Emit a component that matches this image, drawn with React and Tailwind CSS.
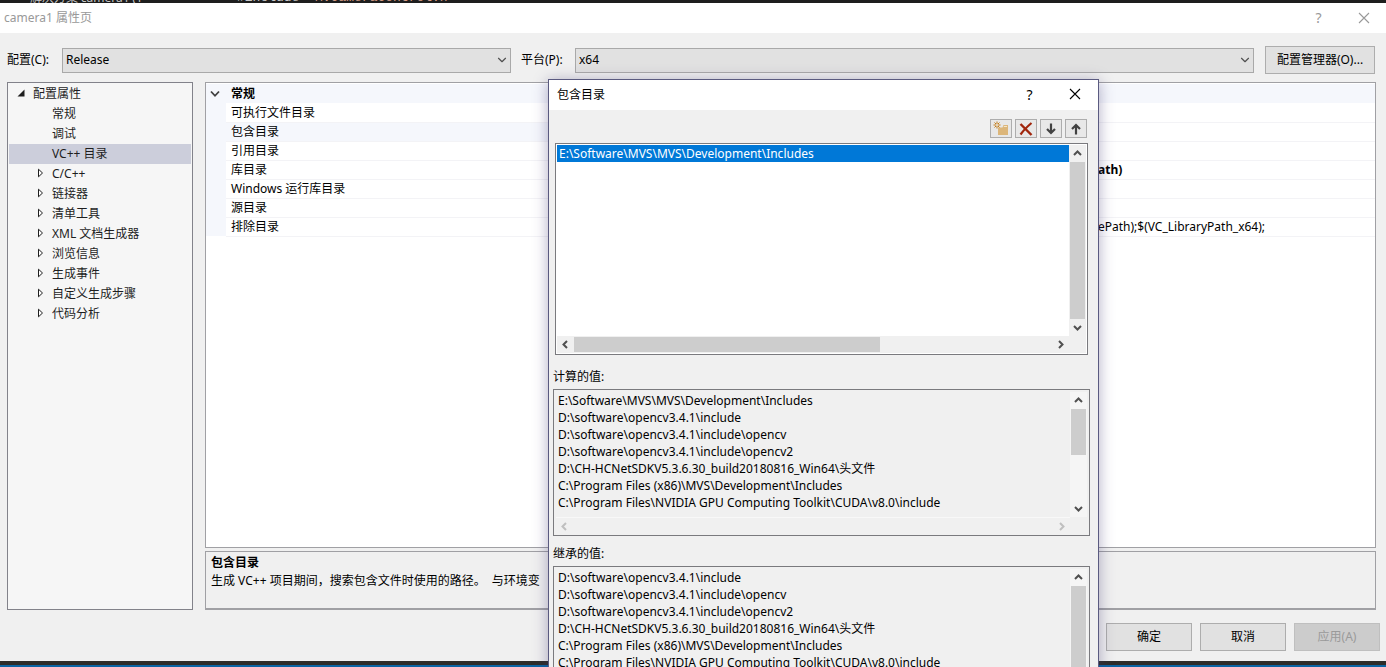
import React from 'react';
import { ChevronDown } from 'lucide-react';

const treeItems = [
    { label: '常规', leaf: true },
    { label: '调试', leaf: true },
    { label: 'VC++ 目录', leaf: true, selected: true },
    { label: 'C/C++' },
    { label: '链接器' },
    { label: '清单工具' },
    { label: 'XML 文档生成器' },
    { label: '浏览信息' },
    { label: '生成事件' },
    { label: '自定义生成步骤' },
    { label: '代码分析' },
];

const properties = [
    { name: '可执行文件目录' },
    { name: '包含目录', selected: true },
    { name: '引用目录' },
    { name: '库目录', value: 'ath)', bold: true },
    { name: 'Windows 运行库目录' },
    { name: '源目录' },
    { name: '排除目录', value: 'ePath);$(VC_LibraryPath_x64);' },
];

const inheritedPaths = [
    'D:\\software\\opencv3.4.1\\include',
    'D:\\software\\opencv3.4.1\\include\\opencv',
    'D:\\software\\opencv3.4.1\\include\\opencv2',
    'D:\\CH-HCNetSDKV5.3.6.30_build20180816_Win64\\头文件',
    'C:\\Program Files (x86)\\MVS\\Development\\Includes',
    'C:\\Program Files\\NVIDIA GPU Computing Toolkit\\CUDA\\v8.0\\include',
];

const includePath = 'E:\\Software\\MVS\\MVS\\Development\\Includes';

const arrowPaths = {
    up: 'M1 6 L4.5 2.5 L8 6',
    down: 'M1 3 L4.5 6.5 L8 3',
    left: 'M6 1 L2.5 4.5 L6 8',
    right: 'M3 1 L6.5 4.5 L3 8',
};

const ScrollArrow = ({ dir, label, disabled }) => (
    <button
        type="button"
        aria-label={label}
        disabled={disabled}
        className="flex h-[17px] w-[17px] shrink-0 items-center justify-center text-[#505050] disabled:text-[#bfbfbf]"
    >
        <svg width="9" height="9" viewBox="0 0 9 9" fill="none" stroke="currentColor" strokeWidth="2">
            <path d={arrowPaths[dir]} />
        </svg>
    </button>
);

const Select = ({ id, value }) => (
    <div className="relative w-full">
        <select
            id={id}
            defaultValue={value}
            className="block h-[25px] w-full appearance-none border border-[#a9a9a9] bg-[#e1e1e1] px-[3px] pb-[2px] text-[12px]"
        >
            <option>{value}</option>
        </select>
        <ChevronDown className="pointer-events-none absolute top-[5px] right-[2px] h-[14px] w-[14px] text-[#505050]" strokeWidth={2} />
    </div>
);

const PushButton = ({ children, disabled }) => (
    <button
        type="button"
        disabled={disabled}
        className="h-7 w-[86px] border border-[#adadad] bg-[#e1e1e1] pb-[2px] text-black disabled:border-[#bfbfbf] disabled:bg-[#cccccc] disabled:text-[#9a9a9a]"
    >
        {children}
    </button>
);

const ToolButton = ({ label, children }) => (
    <button
        type="button"
        aria-label={label}
        className="flex h-[19px] w-[22px] items-center justify-center border border-[#adadad] bg-[#e8e8e8]"
    >
        {children}
    </button>
);

const CloseIcon = () => (
    <svg width="12" height="12" viewBox="0 0 12 12" fill="none" stroke="currentColor" strokeWidth="1.1">
        <path d="M1 1 L11 11 M11 1 L1 11" />
    </svg>
);

const PropertyTree = () => (
    <nav className="w-[186px] shrink-0 border border-[#82828a] bg-[#f6f6f6] p-px">
        <div className="flex h-5 items-center pb-[2px] pl-2">
            <svg width="8" height="8" viewBox="0 0 8 8" className="mr-2 fill-[#1e1e1e]">
                <path d="M7.5 0.5 V7.5 H0.5 Z" />
            </svg>
            配置属性
        </div>
        <ul>
            {treeItems.map((item) => (
                <li
                    key={item.label}
                    className={`flex h-5 items-center pb-[2px] ${item.selected ? 'bg-[#cccedb]' : ''} ${item.leaf ? 'pl-[43px]' : 'pl-7'}`}
                >
                    {!item.leaf && (
                        <svg width="7" height="10" viewBox="0 0 7 10" className="mr-2 fill-white stroke-[#1e1e1e]">
                            <path d="M1.5 1.2 L5.5 5 L1.5 8.8 Z" />
                        </svg>
                    )}
                    {item.label}
                </li>
            ))}
        </ul>
    </nav>
);

const PropertyGrid = () => (
    <div className="min-h-0 flex-1 overflow-hidden border border-[#a0a0a4] bg-white pt-px">
        <table className="w-full table-fixed border-collapse text-left whitespace-nowrap text-black">
            <colgroup>
                <col className="w-5" />
                <col className="w-[322px]" />
                <col />
            </colgroup>
            <tbody>
                <tr className="h-[19px] bg-[#f5f7fc]">
                    <td className="p-0">
                        <svg width="10" height="8" viewBox="0 0 10 8" className="ml-1 fill-none stroke-[#404040]" strokeWidth="1.8">
                            <path d="M1 1.5 L5 5.8 L9 1.5" />
                        </svg>
                    </td>
                    <th colSpan={2} className="p-0 pl-[5px] font-bold">常规</th>
                </tr>
                {properties.map((prop) => (
                    <tr key={prop.name} className="h-[19px]">
                        <td className="bg-[#f5f7fc] p-0" />
                        <td className={`border-b border-[#f3f3f6] p-0 pl-[5px] ${prop.selected ? 'bg-[#f5f7fc]' : ''}`}>{prop.name}</td>
                        <td className={`border-b border-[#f3f3f6] p-0 pl-[550px] ${prop.bold ? 'font-bold' : ''}`}>{prop.value}</td>
                    </tr>
                ))}
            </tbody>
        </table>
    </div>
);

const PathBox = ({ id, label, paths, thumb }) => (
    <div className="mr-2 ml-1 flex flex-col">
        <label htmlFor={id} className="mb-[3px] leading-[18px]">{label}</label>
        <div className="flex h-[147px] flex-col border border-[#7a7a7e] bg-[#f0f0f0] px-[2px] pt-[2px]">
            <div className="flex min-h-0 flex-1">
                <textarea
                    id={id}
                    readOnly
                    value={paths.join('\n')}
                    className="block min-w-0 flex-1 resize-none overflow-hidden bg-[#f0f0f0] pl-[2px] leading-[17px] whitespace-pre outline-none"
                />
                <div className="flex w-[17px] flex-col bg-[#f5f5f5]">
                    <ScrollArrow dir="up" label="向上滚动" />
                    <div className="flex-1 pr-px pl-px">
                        <div className={`bg-[#cdcdcd] ${thumb}`} />
                    </div>
                    <ScrollArrow dir="down" label="向下滚动" />
                </div>
            </div>
            <div className="mr-[17px] flex justify-between border-t border-[#f8f8f8]">
                <ScrollArrow dir="left" label="向左滚动" disabled />
                <ScrollArrow dir="right" label="向右滚动" disabled />
            </div>
        </div>
    </div>
);

const IncludeDialog = () => (
    <section
        role="dialog"
        aria-label="包含目录"
        className="absolute top-[79px] left-[548px] flex w-[551px] flex-col border border-[#5a5a80] bg-[#f0f0f0] text-black shadow-[0_2px_14px_rgba(60,50,110,0.4)]"
    >
        <header className="flex h-[30px] items-center bg-white pr-px pb-[2px] pl-2">
            <h2 className="flex-1">包含目录</h2>
            <button type="button" aria-label="帮助" className="w-[45px] text-[14px]">?</button>
            <button type="button" aria-label="关闭" className="flex w-[45px] justify-center"><CloseIcon /></button>
        </header>
        <div className="flex justify-end gap-[3px] px-[11px] pt-[9px] pb-[5px]">
            <ToolButton label="新行">
                <svg width="16" height="15" viewBox="0 0 16 15" className="shrink-0">
                    <path d="M5 8 V6.5 H9.5 L10.5 4 H15 V14 H5 Z" fill="#dcb67a" />
                    <path d="M10.8 5.5 H14" stroke="#f5e6c8" />
                    <path d="M4 0.5 V7.5 M0.5 4 H7.5 M1.5 1.5 L6.5 6.5 M6.5 1.5 L1.5 6.5" stroke="#c27d1a" />
                    <circle cx="4" cy="4" r="1" fill="#f0f0f0" />
                </svg>
            </ToolButton>
            <ToolButton label="删除">
                <svg width="14" height="14" viewBox="0 0 14 14" fill="none" stroke="#a1260d">
                    <path d="M1.5 2 L12.5 13" strokeWidth="2.4" />
                    <path d="M12.5 1 C9 4 4 9 1.5 12.5" strokeWidth="2.2" />
                </svg>
            </ToolButton>
            <ToolButton label="下移">
                <svg width="12" height="12" viewBox="0 0 12 12" fill="none" stroke="#424242" strokeWidth="2.2">
                    <path d="M6 0.5 V10 M2 6 L6 10 L10 6" />
                </svg>
            </ToolButton>
            <ToolButton label="上移">
                <svg width="12" height="12" viewBox="0 0 12 12" fill="none" stroke="#424242" strokeWidth="2.2">
                    <path d="M6 11.5 V2 M2 6 L6 2 L10 6" />
                </svg>
            </ToolButton>
        </div>
        <div className="mr-[10px] ml-[6px] flex h-[212px] flex-col border border-[#7a7a7e] bg-white p-px">
            <div className="flex min-h-0 flex-1">
                <ul className="min-w-0 flex-1">
                    <li className="h-[17px] bg-[#0078d7] pl-[2px] leading-[17px] text-white">{includePath}</li>
                </ul>
                <div className="flex w-[17px] flex-col bg-[#f0f0f0]">
                    <ScrollArrow dir="up" label="向上滚动" />
                    <div className="mx-px flex-1 bg-[#cdcdcd]" />
                    <ScrollArrow dir="down" label="向下滚动" />
                </div>
            </div>
            <div className="flex bg-[#f0f0f0] pr-[17px]">
                <ScrollArrow dir="left" label="向左滚动" />
                <div className="flex-1 py-px">
                    <div className="h-full w-[306px] bg-[#cdcdcd]" />
                </div>
                <ScrollArrow dir="right" label="向右滚动" />
            </div>
        </div>
        <div className="mt-[13px] flex flex-col gap-[9px]">
            <PathBox id="evaluated" label="计算的值:" paths={[includePath, ...inheritedPaths]} thumb="h-[46px]" />
            <PathBox id="inherited" label="继承的值:" paths={inheritedPaths} thumb="h-full" />
        </div>
    </section>
);

const App = () => {
    return (
        <div className="relative flex h-screen flex-col overflow-hidden bg-[#f0f0f0] font-['Noto_Sans','Noto_Sans_CJK_SC',sans-serif] text-[12px] leading-[17px] text-[#1e1e1e]">
            {/* sliver of the editor window behind */}
            <div className="flex h-[3px] shrink-0 items-end overflow-hidden bg-[#1e1e1e] pl-[30px] leading-[10px] whitespace-nowrap text-[#c8c8c8]">
                <span className="w-[207px]">解决方案&apos;camera1&apos;(1</span>
                <code className="font-['Liberation_Mono',monospace] text-[13px] leading-[10px]">
                    #include <span className="text-[#d69d85]">&quot;MvCameraControl.h&quot;</span>
                </code>
            </div>
            <header className="flex h-[30px] shrink-0 items-center bg-white pb-px pl-1 text-[#999999]">
                <h1 className="flex-1">camera1 属性页</h1>
                <button type="button" aria-label="帮助" className="w-[45px] text-[14px]">?</button>
                <button type="button" aria-label="关闭" className="flex w-[45px] justify-center"><CloseIcon /></button>
            </header>

            <div className="flex shrink-0 items-center pt-[13px] pr-[11px] pb-2 pl-[7px] whitespace-nowrap text-black">
                <label htmlFor="config" className="w-[55px] shrink-0 pb-[2px]">配置(C):</label>
                <div className="w-[449px] shrink-0"><Select id="config" value="Release" /></div>
                <label htmlFor="platform" className="ml-[10px] w-[54px] shrink-0 pb-[2px]">平台(P):</label>
                <Select id="platform" value="x64" />
                <button type="button" className="ml-[11px] h-7 w-[110px] shrink-0 border border-[#adadad] bg-[#e1e1e1] pb-[2px]">
                    配置管理器(O)...
                </button>
            </div>

            <main className="flex min-h-0 flex-1 gap-3 pr-[10px] pl-[7px]">
                <PropertyTree />
                <div className="flex min-w-0 flex-1 flex-col gap-[3px]">
                    <PropertyGrid />
                    <div className="h-[59px] shrink-0 overflow-hidden border border-b-2 border-[#a0a0a4] px-[5px] py-[2px] leading-[18px] whitespace-pre text-black">
                        <h3 className="font-bold">包含目录</h3>
                        <p>生成 VC++ 项目期间，搜索包含文件时使用的路径。  与环境变</p>
                    </div>
                </div>
            </main>

            <footer className="flex shrink-0 justify-end gap-2 pt-[13px] pr-[6px] pb-[10px]">
                <PushButton>确定</PushButton>
                <PushButton>取消</PushButton>
                <PushButton disabled>应用(A)</PushButton>
            </footer>
            <div className="h-[6px] shrink-0 border-b-2 border-[#0a64a4] bg-[#2d2d2a]" />

            <IncludeDialog />
        </div>
    );
};

export default App;
